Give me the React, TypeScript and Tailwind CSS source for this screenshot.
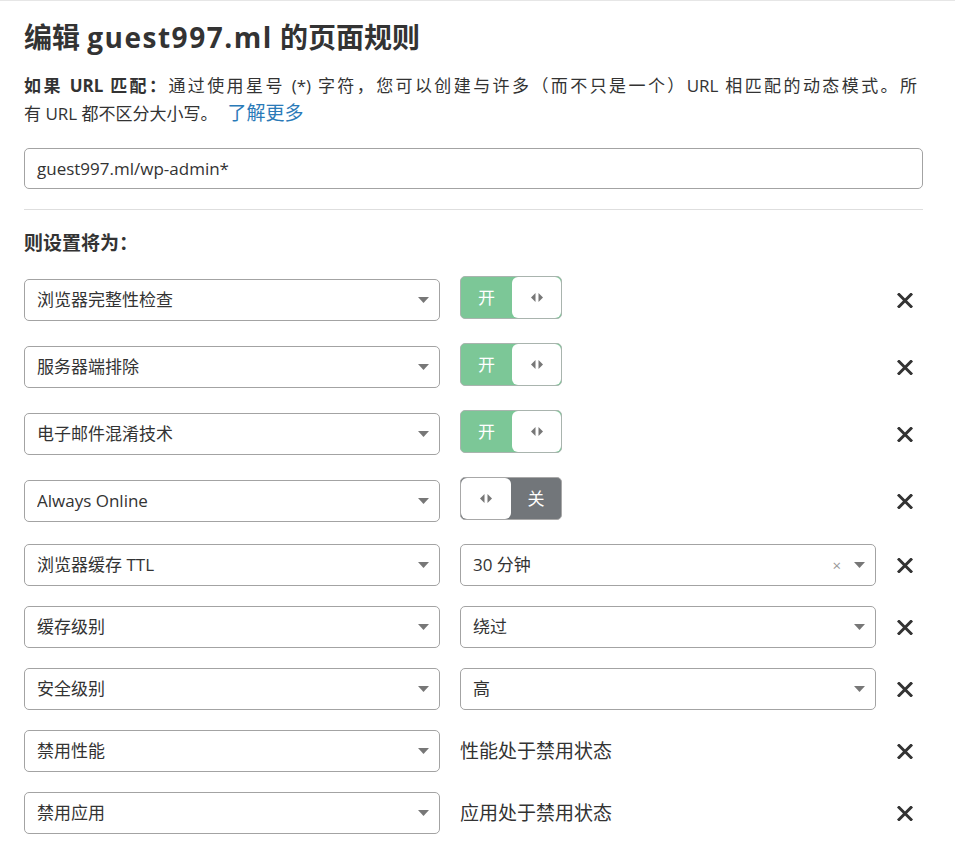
import React from 'react';

type Rule =
  | { kind: 'toggle'; label: string; on: boolean }
  | { kind: 'select'; label: string; value: string; clearable?: boolean }
  | { kind: 'text'; label: string; value: string };

const rules: Rule[] = [
  { kind: 'toggle', label: '浏览器完整性检查', on: true },
  { kind: 'toggle', label: '服务器端排除', on: true },
  { kind: 'toggle', label: '电子邮件混淆技术', on: true },
  { kind: 'toggle', label: 'Always Online', on: false },
  { kind: 'select', label: '浏览器缓存 TTL', value: '30 分钟', clearable: true },
  { kind: 'select', label: '缓存级别', value: '绕过' },
  { kind: 'select', label: '安全级别', value: '高' },
  { kind: 'text', label: '禁用性能', value: '性能处于禁用状态' },
  { kind: 'text', label: '禁用应用', value: '应用处于禁用状态' },
];

function Caret() {
  return (
    <svg width="11" height="6" viewBox="0 0 11 6" className="shrink-0">
      <path d="M0 0h11L5.5 6z" fill="#777" />
    </svg>
  );
}

function Arrows() {
  return (
    <svg width="12" height="9" viewBox="0 0 12 9">
      <path d="M4.5 0v9L0 4.5z" fill="#777" />
      <path d="M7.5 0v9L12 4.5z" fill="#777" />
    </svg>
  );
}

function CloseIcon() {
  return (
    <svg width="16" height="15" viewBox="0 0 16 15">
      <path d="M2 1.5l12 12M14 1.5l-12 12" stroke="#333" strokeWidth="3" strokeLinecap="square" />
    </svg>
  );
}

function Select({ value, clearable }: { value: string; clearable?: boolean }) {
  return (
    <div className="flex h-[42px] w-[416px] shrink-0 items-center rounded-[5px] border border-[#a3a3a3] bg-white pl-3 pr-[10px]">
      <span className="flex-1 truncate text-[17px] text-[#333]">{value}</span>
      {clearable && <span className="mr-[13px] text-[15px] leading-none text-[#999]">×</span>}
      <Caret />
    </div>
  );
}

function Toggle({ on }: { on: boolean }) {
  if (on) {
    return (
      <div className="flex h-[43px] w-[102px] shrink-0 overflow-hidden rounded-[5px] border border-[#a9b4ae] bg-[#7cc797]">
        <div className="flex w-[51px] items-center justify-center text-[17px] text-white">开</div>
        <div className="flex flex-1 items-center justify-center rounded-[6px] bg-white">
          <Arrows />
        </div>
      </div>
    );
  }
  return (
    <div className="flex h-[43px] w-[102px] shrink-0 overflow-hidden rounded-[5px] border border-[#a8a8a8] bg-[#72767a]">
      <div className="flex w-[50px] items-center justify-center rounded-[6px] bg-white">
        <Arrows />
      </div>
      <div className="flex flex-1 items-center justify-center text-[17px] text-white">关</div>
    </div>
  );
}

function RuleRow({ rule }: { rule: Rule }) {
  const isToggle = rule.kind === 'toggle';
  return (
    <div className={`flex gap-5 ${isToggle ? 'h-[47px] items-start' : 'h-[42px] items-center'}`}>
      <div className={isToggle ? 'mt-[3px]' : ''}>
        <Select value={rule.label} />
      </div>
      {rule.kind === 'toggle' && <Toggle on={rule.on} />}
      {rule.kind === 'select' && <Select value={rule.value} clearable={rule.clearable} />}
      {rule.kind === 'text' && (
        <div className="w-[416px] text-[19px] text-[#333]">{rule.value}</div>
      )}
      <div className={`flex flex-1 justify-end pr-[10px] ${isToggle ? 'mt-[17px]' : ''}`}>
        <CloseIcon />
      </div>
    </div>
  );
}

export default function App() {
  return (
    <div
      className="min-h-[851px] border-t border-[#e6e6e6] bg-white pl-6 pr-8 pt-4 text-[#333]"
      style={{ fontFamily: '"Open Sans", "Noto Sans CJK SC", sans-serif' }}
    >
      <h1 className="text-[28px] font-bold leading-[40px] text-[#333]">
        编辑 <span className="tracking-[1.5px]">guest997.ml</span> 的页面规则
      </h1>

      <div className="mt-[15px] text-[17px] leading-[28px] text-[#333]">
        <div className="w-[893px] whitespace-nowrap text-justify [text-align-last:justify]">
          <b className="font-bold">如果 URL 匹配：</b>通过使用星号 (*) 字符，您可以创建与许多（而不只是一个）URL 相匹配的动态模式。所
        </div>
        <div className="h-[28px]">
          有 URL 都不区分大小写。<a className="ml-[10px] text-[19px] leading-none text-[#2a7ab8]">了解更多</a>
        </div>
      </div>

      <div className="mt-5 flex h-[41px] items-center rounded-[5px] border border-[#a3a3a3] px-3 text-[17px] text-[#333]">
        guest997.ml/wp-admin*
      </div>

      <div className="mt-5 border-t border-[#dedede]" />

      <div className="mt-[21px] text-[19px] font-bold leading-[24px]">则设置将为：</div>

      <div className="mt-[21px] flex flex-col gap-5 pb-6">
        {rules.map((r) => (
          <RuleRow key={r.label} rule={r} />
        ))}
      </div>
    </div>
  );
}
